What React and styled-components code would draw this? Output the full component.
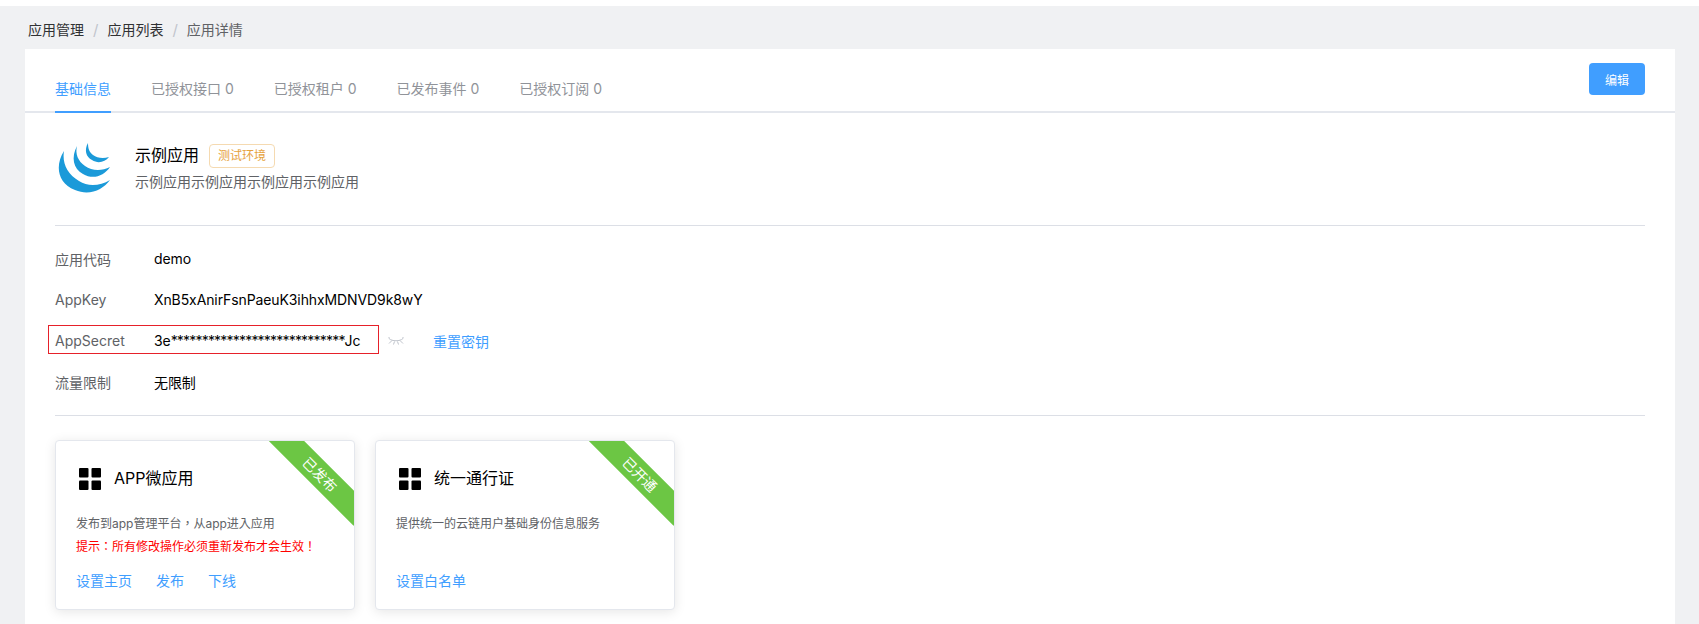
import React from 'react';
import styled, { createGlobalStyle } from 'styled-components';

const GlobalStyle = createGlobalStyle`
  html, body {
    margin: 0;
    height: 624px;
    overflow: hidden;
    background: #fff;
    font-family: Inter, "Noto Sans CJK SC", sans-serif;
    -webkit-font-smoothing: antialiased;
  }
  * { box-sizing: border-box; }
`;

const App = () => {
  return (
    <>
      <GlobalStyle />
      <Page>
        <Breadcrumb>
          <Crumb>应用管理</Crumb>
          <Sep>/</Sep>
          <Crumb>应用列表</Crumb>
          <Sep>/</Sep>
          <Crumb $last>应用详情</Crumb>
        </Breadcrumb>
        <Main>
          <TabBar>
            <Tabs>
              <Tab $active>基础信息</Tab>
              <Tab>已授权接口 0</Tab>
              <Tab>已授权租户 0</Tab>
              <Tab>已发布事件 0</Tab>
              <Tab>已授权订阅 0</Tab>
            </Tabs>
            <EditButton>编辑</EditButton>
          </TabBar>
          <Content>
            <AppHeader>
              <LogoSlot>
                <svg width="52" height="50" viewBox="0 0 52 50" fill="#1b9ad9">
                  <path d="M6 8C-3 22-1 40 17 47C31 53 45 47 52 37C42 43 30 44 21 38C9 31 4 20 6 8Z" />
                  <path d="M19 3C13 14 15 26 25 31C35 37 46 33 52 24C44 28 34 28 27 23C20 18 17 11 19 3Z" />
                  <path d="M30 0C26 7 28 14 34 17C40 21 47 19 51 14C45 16 39 15 35 12C31 9 30 5 30 0Z" />
                </svg>
              </LogoSlot>
              <AppInfo>
                <NameRow>
                  <AppName>示例应用</AppName>
                  <EnvTag>测试环境</EnvTag>
                </NameRow>
                <AppDesc>示例应用示例应用示例应用示例应用</AppDesc>
              </AppInfo>
            </AppHeader>
            <InfoList>
              <InfoRow>
                <Label>应用代码</Label>
                <Value>demo</Value>
              </InfoRow>
              <InfoRow>
                <Label>AppKey</Label>
                <Value>XnB5xAnirFsnPaeuK3ihhxMDNVD9k8wY</Value>
              </InfoRow>
              <InfoRow>
                <RedMark />
                <Label>AppSecret</Label>
                <SecretValue>
                  3e<Stars>****************************</Stars>Jc
                </SecretValue>
                <EyeIcon width="16" height="10" viewBox="0 0 16 10" fill="none" stroke="#c0c4cc" strokeWidth="1">
                  <path d="M1 2.5C4 5.5 12 5.5 15 2.5" />
                  <path d="M1 7.5L4 4.5M15 7.5L12 4.5M5.5 8.5L6.5 5.5M10.5 8.5L9.5 5.5M1 2.5L1 1M15 2.5V1" />
                </EyeIcon>
                <LinkText>重置密钥</LinkText>
              </InfoRow>
              <InfoRow>
                <Label>流量限制</Label>
                <Value>无限制</Value>
              </InfoRow>
            </InfoList>
            <CardGrid>
              <ServiceCard>
                <Ribbon>已发布</Ribbon>
                <CardTitle>
                  <GridIcon />
                  <span>APP微应用</span>
                </CardTitle>
                <CardBody>
                  <CardDesc>发布到app管理平台，从app进入应用</CardDesc>
                  <CardWarn>提示：所有修改操作必须重新发布才会生效！</CardWarn>
                </CardBody>
                <CardLinks>
                  <LinkText>设置主页</LinkText>
                  <LinkText>发布</LinkText>
                  <LinkText>下线</LinkText>
                </CardLinks>
              </ServiceCard>
              <ServiceCard>
                <Ribbon>已开通</Ribbon>
                <CardTitle>
                  <GridIcon />
                  <span>统一通行证</span>
                </CardTitle>
                <CardBody>
                  <CardDesc>提供统一的云链用户基础身份信息服务</CardDesc>
                </CardBody>
                <CardLinks>
                  <LinkText>设置白名单</LinkText>
                </CardLinks>
              </ServiceCard>
            </CardGrid>
          </Content>
        </Main>
      </Page>
    </>
  );
};

const GridIcon = () => (
  <svg width="22" height="22" viewBox="0 0 22 22" fill="#000">
    <rect x="0" y="0" width="9.5" height="9.5" rx="1" />
    <rect x="12.5" y="0" width="9.5" height="9.5" rx="1" />
    <rect x="0" y="12.5" width="9.5" height="9.5" rx="1" />
    <rect x="12.5" y="12.5" width="9.5" height="9.5" rx="1" />
  </svg>
);

export default App;

const Page = styled.div`
  margin-top: 6px;
  height: 618px;
  padding: 0 24px 0 25px;
  background: #f0f1f3;
  overflow: hidden;
`;

const Breadcrumb = styled.div`
  height: 43px;
  padding: 3px 0 0 3px;
  display: flex;
  align-items: center;
  font-size: 14px;
`;

const Crumb = styled.span`
  color: ${(p) => (p.$last ? '#606266' : '#303133')};
`;

const Sep = styled.span`
  margin: 0 9px;
  font-size: 15px;
  color: #c0c4cc;
`;

const Main = styled.div`
  height: 575px;
  background: #fff;
`;

const TabBar = styled.div`
  height: 64px;
  padding: 0 30px;
  display: flex;
  justify-content: space-between;
  align-items: flex-start;
  border-bottom: 2px solid #e4e7ed;
`;

const Tabs = styled.div`
  height: 64px;
  display: flex;
  gap: 40px;
`;

const Tab = styled.div`
  height: 64px;
  padding-top: 18px;
  line-height: 44px;
  font-size: 14px;
  color: ${(p) => (p.$active ? '#409eff' : '#909399')};
  border-bottom: 2px solid ${(p) => (p.$active ? '#409eff' : 'transparent')};
`;

const EditButton = styled.button`
  width: 56px;
  height: 32px;
  margin-top: 14px;
  padding: 0;
  border: none;
  border-radius: 4px;
  background: #409eff;
  color: #fff;
  font-family: inherit;
  font-size: 12px;
`;

const Content = styled.div`
  padding: 0 30px;
`;

const AppHeader = styled.div`
  height: 113px;
  padding-top: 30px;
  display: flex;
  align-items: flex-start;
  border-bottom: 1px solid #dcdfe6;
`;

const LogoSlot = styled.div`
  width: 80px;
  padding-left: 3px;
`;

const AppInfo = styled.div`
  display: flex;
  flex-direction: column;
`;

const NameRow = styled.div`
  height: 25px;
  display: flex;
  align-items: center;
  gap: 10px;
`;

const AppName = styled.span`
  margin-top: -3px;
  font-size: 16px;
  color: #000;
`;

const EnvTag = styled.span`
  height: 24px;
  padding: 0 8px;
  line-height: 22px;
  font-size: 12px;
  color: #e6a23c;
  background: #fff;
  border: 1px solid #f5dab1;
  border-radius: 4px;
`;

const AppDesc = styled.div`
  margin-top: 2px;
  line-height: 24px;
  font-size: 14px;
  color: #606266;
`;

const InfoList = styled.div`
  padding: 12px 0 13px;
  border-bottom: 1px solid #dcdfe6;
`;

const InfoRow = styled.div`
  position: relative;
  height: 41px;
  display: flex;
  align-items: center;
  font-size: 14px;
`;

const RedMark = styled.div`
  position: absolute;
  left: -7px;
  top: 5px;
  width: 331px;
  height: 29px;
  border: 1px solid #e6212a;
`;

const Label = styled.div`
  width: 99px;
  color: #606266;
`;

const Value = styled.div`
  color: #000;
  letter-spacing: -0.1px;
`;

const SecretValue = styled(Value)`
  width: 234px;
  white-space: nowrap;
`;

const Stars = styled.span`
  letter-spacing: -0.8px;
`;

const EyeIcon = styled.svg`
  flex: none;
`;

const LinkText = styled.span`
  font-size: 14px;
  color: #409eff;

  ${EyeIcon} + & {
    margin-left: 29px;
  }
`;

const CardGrid = styled.div`
  padding-top: 24px;
  display: flex;
  gap: 20px;
`;

const ServiceCard = styled.div`
  position: relative;
  width: 300px;
  height: 170px;
  padding: 27px 20px 0;
  display: flex;
  flex-direction: column;
  border: 1px solid #e4e7ed;
  border-radius: 4px;
  background: #fff;
  box-shadow: 0 2px 12px rgba(0, 0, 0, 0.1);
  overflow: hidden;
`;

const Ribbon = styled.div`
  position: absolute;
  top: 21px;
  right: -26px;
  width: 120px;
  height: 25px;
  line-height: 25px;
  text-align: center;
  font-size: 14px;
  color: #fff;
  background: #6cc644;
  transform: rotate(45deg);
`;

const CardTitle = styled.div`
  height: 22px;
  padding-left: 3px;
  display: flex;
  align-items: center;
  gap: 13px;
  font-size: 16px;
  color: #000;

  span {
    margin-top: -5px;
  }
`;

const CardBody = styled.div`
  height: 67px;
  padding-top: 24px;
`;

const CardDesc = styled.div`
  line-height: 20px;
  font-size: 12px;
  color: #606266;
  font-family: Inter, "Noto Sans CJK TC", sans-serif;
`;

const CardWarn = styled.div`
  margin-top: 3px;
  line-height: 20px;
  font-size: 12px;
  color: #f00;
  font-family: Inter, "Noto Sans CJK TC", sans-serif;
`;

const CardLinks = styled.div`
  margin-top: 13px;
  display: flex;
  gap: 24px;
`;
